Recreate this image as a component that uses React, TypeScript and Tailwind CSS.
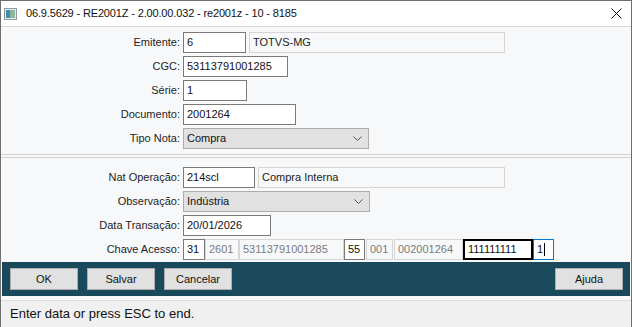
import React from "react";

const font = { fontFamily: '"Liberation Sans", Arial, sans-serif' };

function Label({ text }: { text: string }) {
  return <div className="w-[182px] shrink-0 pr-[3px] text-right text-[#1e1e1e]">{text}</div>;
}

function Input({ value, w, kind = "edit", className = "" }: { value: string; w: number; kind?: "edit" | "ro" | "off"; className?: string }) {
  const cls =
    kind === "edit"
      ? "border-[#7a7a7a] bg-white text-[#111]"
      : kind === "ro"
      ? "border-[#d5d5d5] bg-[#f7f8fa] text-[#222]"
      : "border-[#d5d5d5] bg-[#f7f8fa] text-[#7a7a7a]";
  return (
    <div className={`flex h-[21px] shrink-0 items-center border px-[3px] ${cls} ${className}`} style={{ width: w }}>
      {value}
    </div>
  );
}

function Select({ value, w }: { value: string; w: number }) {
  return (
    <div
      className="flex h-[21px] shrink-0 items-center justify-between border border-[#adadad] bg-[#e1e1e1] pl-[3px] pr-[6px] text-[#111]"
      style={{ width: w }}
    >
      <span>{value}</span>
      <svg width="9" height="5" viewBox="0 0 9 5" fill="none">
        <path d="M0.5 0.5 L4.5 4.5 L8.5 0.5" stroke="#555" strokeWidth="1" />
      </svg>
    </div>
  );
}

function Row({ label, children }: { label: string; children: React.ReactNode }) {
  return (
    <div className="flex h-[21px] items-center">
      <Label text={label} />
      {children}
    </div>
  );
}

function Btn({ text }: { text: string }) {
  return (
    <button className="flex h-[22px] w-[68px] items-center justify-center border border-[#adadad] bg-[#e1e1e1] text-[11px] text-[#111]">
      {text}
    </button>
  );
}

export default function App() {
  return (
    <div
      className="flex h-[327px] w-[632px] flex-col overflow-hidden border-x border-t border-[#6f6f6f] bg-[#f7f8fa] text-[11px]"
      style={font}
    >
      {/* title bar */}
      <div className="flex h-[26px] shrink-0 items-center border-b border-[#d9d9d9] bg-white">
        <svg className="ml-[3px]" width="13" height="12" viewBox="0 0 13 12">
          <rect x="0.5" y="0.5" width="12" height="11" fill="#e8ecef" stroke="#8c9aa2" />
          <rect x="2" y="2" width="4" height="8" fill="#3f8fb0" />
          <rect x="6" y="2" width="5" height="8" fill="#8fb59a" />
        </svg>
        <span className="ml-[9px] text-[11px] tracking-[-0.15px] text-[#111]">
          06.9.5629 - RE2001Z - 2.00.00.032 - re2001z - 10 - 8185
        </span>
        <svg className="ml-auto mr-[9px]" width="11" height="11" viewBox="0 0 11 11">
          <path d="M0.5 0.5 L10.5 10.5 M10.5 0.5 L0.5 10.5" stroke="#111" strokeWidth="1" />
        </svg>
      </div>

      {/* panel 1 */}
      <div className="flex shrink-0 flex-col gap-[3px] border-b border-[#d2d2d2] pb-[5px] pt-[5px]">
        <Row label="Emitente:">
          <Input value="6" w={63} />
          <div className="w-[3px]" />
          <Input value="TOTVS-MG" w={256} kind="ro" />
        </Row>
        <Row label="CGC:">
          <Input value="53113791001285" w={105} />
        </Row>
        <Row label="Série:">
          <Input value="1" w={64} />
        </Row>
        <Row label="Documento:">
          <Input value="2001264" w={113} />
        </Row>
        <Row label="Tipo Nota:">
          <Select value="Compra" w={186} />
        </Row>
      </div>

      {/* panel 2 */}
      <div className="mt-[2px] flex shrink-0 flex-col gap-[3px] border-t border-[#d2d2d2] pb-[2px] pt-[9px]">
        <Row label="Nat Operação:">
          <Input value="214scl" w={72} />
          <div className="w-[3px]" />
          <Input value="Compra Interna" w={247} kind="ro" />
        </Row>
        <Row label="Observação:">
          <Select value="Indústria" w={187} />
        </Row>
        <Row label="Data Transação:">
          <Input value="20/01/2026" w={88} />
        </Row>
        <Row label="Chave Acesso:">
          <div className="flex items-center">
            <Input value="31" w={22} />
            <Input value="2601" w={34} kind="off" />
            <Input value="53113791001285" w={105} kind="off" />
            <Input value="55" w={21} />
            <Input value="001" w={27} kind="off" className="ml-[1px]" />
            <Input value="002001264" w={69} kind="off" className="ml-[1px]" />
            <div className="flex h-[21px] w-[70px] items-center border-2 border-black bg-white px-[3px] text-[#111]">
              111111111
            </div>
            <div className="flex h-[21px] w-[21px] items-center border border-[#0078d7] bg-white px-[3px] text-[#111]">
              1<span className="ml-[1px] inline-block h-[13px] w-[1px] bg-black" />
            </div>
          </div>
        </Row>
      </div>

      {/* button bar */}
      <div className="mx-[1px] flex h-[34px] shrink-0 items-center gap-[9px] bg-[#19495b] px-[8px]">
        <Btn text="OK" />
        <Btn text="Salvar" />
        <Btn text="Cancelar" />
        <div className="ml-auto mr-[-1px]">
          <Btn text="Ajuda" />
        </div>
      </div>

      {/* status bar */}
      <div className="mt-[4px] flex flex-1 items-center border-t border-[#dcdcdc] bg-[#f0f0f0] pl-[9px] text-[13px] text-[#111]">
        Enter data or press ESC to end.
      </div>
    </div>
  );
}
